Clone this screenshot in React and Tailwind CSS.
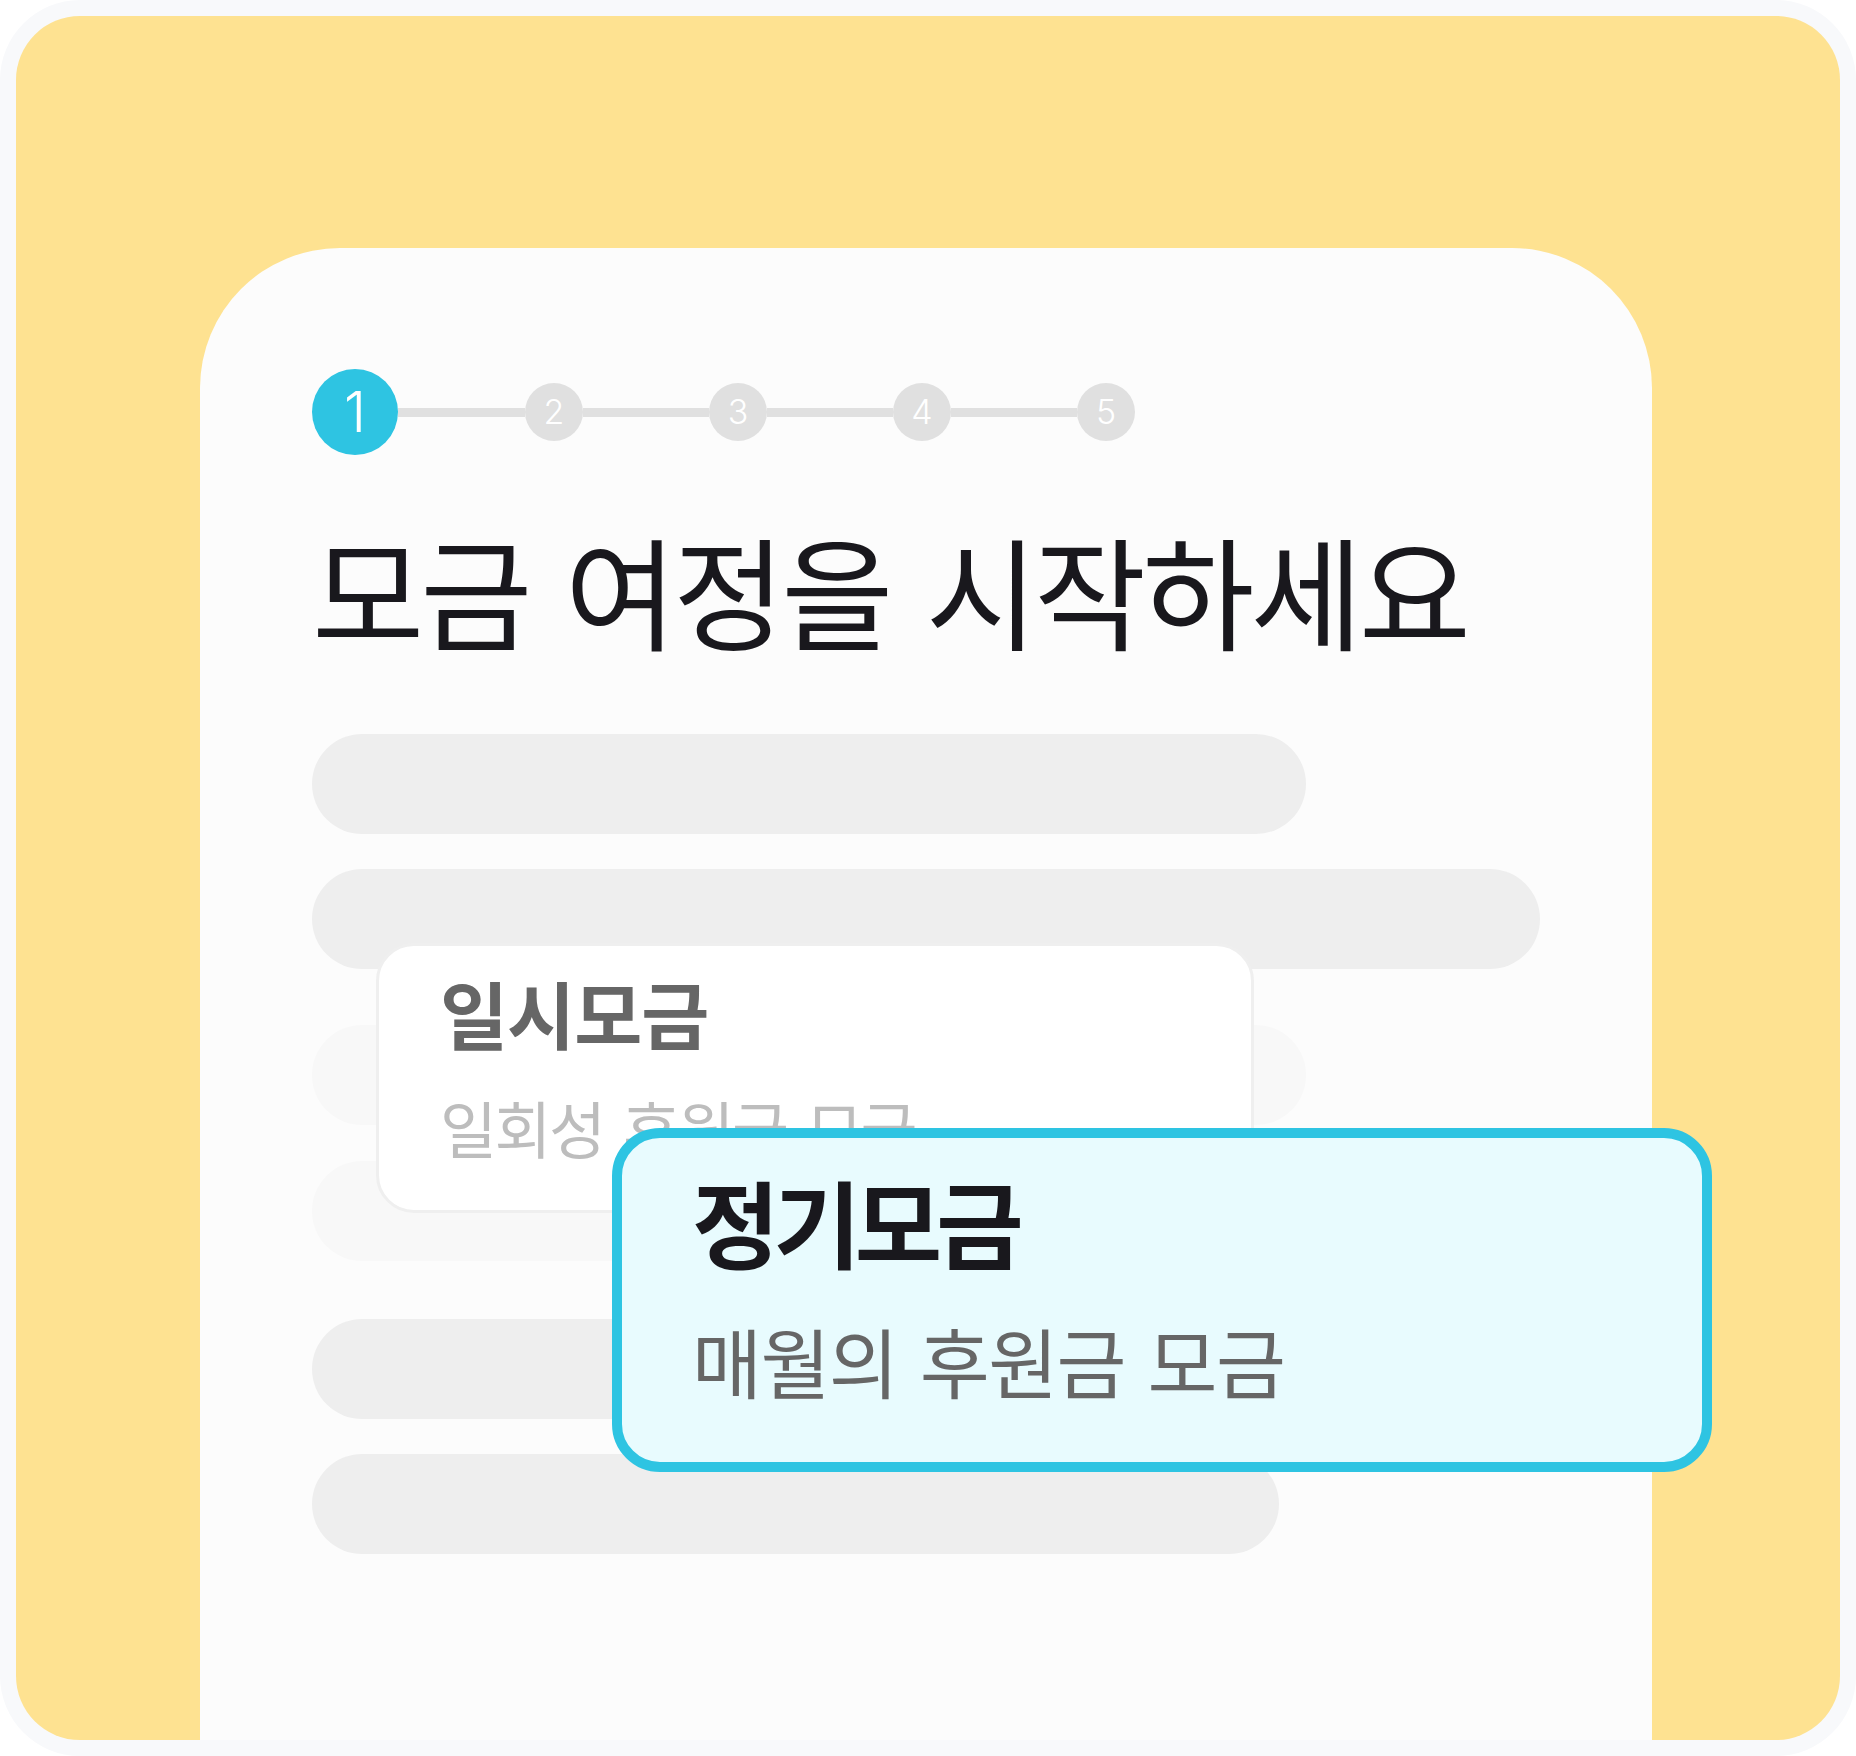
import { Fragment } from 'react';

const steps = [2, 3, 4, 5];

function Bar({ w, faint, className = '' }) {
  return (
    <div
      className={`h-[100px] shrink-0 rounded-full ${faint ? 'bg-[#f8f8f8]' : 'bg-[#eeeeee]'} ${className}`}
      style={{ width: w }}
    />
  );
}

export default function App() {
  return (
    <div className="w-[1856px] h-[1756px] bg-white font-['Noto_Sans_CJK_KR',_'Noto_Sans',_sans-serif]">
      <div className="h-full rounded-[80px] bg-[#f8f9fb] p-4">
        <div className="h-full rounded-[64px] bg-[#fee291] pl-[184px] pr-[188px] pt-[232px] flex flex-col">
          <div className="relative flex-1 rounded-t-[140px] bg-[#fcfcfc] pl-[112px] pt-[121px] flex flex-col">
            {/* stepper */}
            <div className="flex items-center font-['Inter',_sans-serif]">
              <div className="w-[86px] h-[86px] rounded-full bg-[#2ec4e2] flex items-center justify-center text-white text-[56px] font-light leading-none">
                1
              </div>
              {steps.map((n) => (
                <Fragment key={n}>
                  <div className={`h-[9px] bg-[#e0e0e0] ${n === 2 ? 'w-[127px]' : 'w-[126px]'}`} />
                  <div className="w-[58px] h-[58px] rounded-full bg-[#e0e0e0] flex items-center justify-center text-white text-[34px] font-light leading-none">
                    {n}
                  </div>
                </Fragment>
              ))}
            </div>

            <h1 className="mt-[72px] text-[122px] leading-none font-normal tracking-[-4px] [word-spacing:13px] text-[#19181d] whitespace-nowrap">
              모금 여정을 시작하세요
            </h1>

            <div className="mt-[85px] flex flex-col">
              <Bar w={994} />
              <Bar w={1228} className="mt-[35px]" />
              <Bar w={994} faint className="mt-[56px]" />
              <Bar w={1228} faint className="mt-[36px]" />
              <Bar w={994} className="mt-[58px]" />
              <Bar w={967} className="mt-[35px]" />
            </div>

            {/* one-time option */}
            <div className="absolute left-[176px] top-[695px] w-[878px] h-[270px] rounded-[38px] border-[3px] border-[#efefef] bg-white pl-[61px] pt-[29px]">
              <div className="text-[74px] leading-none font-bold tracking-[-1px] text-[#666666] whitespace-nowrap">
                일시모금
              </div>
              <div className="mt-[47px] text-[62px] leading-none tracking-[-2.5px] [word-spacing:8px] text-[#bdbdbd] whitespace-nowrap">
                일회성 후원금 모금
              </div>
            </div>

            {/* recurring option (selected) */}
            <div className="absolute left-[412px] top-[880px] w-[1100px] h-[344px] rounded-[48px] border-[10px] border-[#2ec4e2] bg-[#e8fbfe] pl-[70px] pt-[35px]">
              <div className="text-[95px] leading-none font-bold tracking-[-6px] text-[#19181d] whitespace-nowrap">
                정기모금
              </div>
              <div className="mt-[54px] text-[76px] leading-none tracking-[-1.5px] [word-spacing:7px] text-[#666666] whitespace-nowrap">
                매월의 후원금 모금
              </div>
            </div>
          </div>
        </div>
      </div>
    </div>
  );
}
